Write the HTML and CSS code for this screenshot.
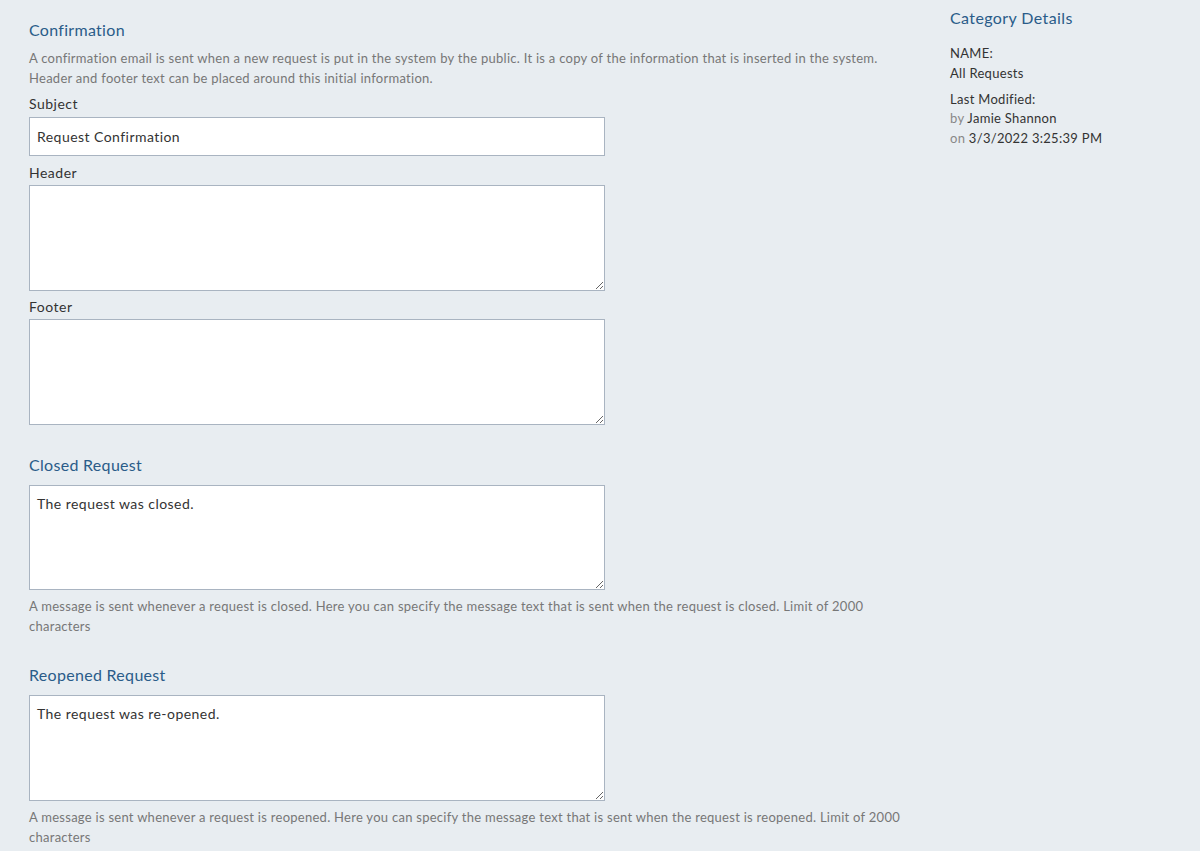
FILE: index.html
```html
<!DOCTYPE html>
<html>
<head>
<meta charset="utf-8">
<link rel="stylesheet" href="styles.css">
</head>
<body>
<div class="page">
  <main class="main">
    <section class="section">
      <h2 class="heading">Confirmation</h2>
      <p class="desc">A confirmation email is sent when a new request is put in the system by the public. It is a copy of the information that is inserted in the system. Header and footer text can be placed around this initial information.</p>
      <label class="label">Subject</label>
      <input class="input" type="text" value="Request Confirmation">
      <label class="label label-gap">Header</label>
      <textarea class="textarea"></textarea>
      <label class="label label-gap label-gap-2">Footer</label>
      <textarea class="textarea"></textarea>
    </section>
    <section class="section section-2">
      <h2 class="heading">Closed Request</h2>
      <textarea class="textarea textarea-short">The request was closed.</textarea>
      <p class="help">A message is sent whenever a request is closed. Here you can specify the message text that is sent when the request is closed. Limit of 2000 characters</p>
    </section>
    <section class="section section-3">
      <h2 class="heading">Reopened Request</h2>
      <textarea class="textarea">The request was re-opened.</textarea>
      <p class="help">A message is sent whenever a request is reopened. Here you can specify the message text that is sent when the request is reopened. Limit of 2000 characters</p>
    </section>
  </main>
  <aside class="side">
    <h3 class="side-title">Category Details</h3>
    <div class="side-block">
      <div class="side-line">NAME:</div>
      <div class="side-line">All Requests</div>
    </div>
    <div class="side-block">
      <div class="side-line">Last Modified:</div>
      <div class="side-line"><span class="muted">by</span> Jamie Shannon</div>
      <div class="side-line"><span class="muted">on</span> 3/3/2022 3:25:39 PM</div>
    </div>
  </aside>
</div>
</body>
</html>
```

FILE: styles.css
```css
* { box-sizing: border-box; }
html, body {
  margin: 0;
  padding: 0;
  background: #e8edf1;
}
body {
  font-family: "Lato", "Open Sans", sans-serif;
  color: #333;
}
.page {
  display: flex;
  padding: 0 0 0 29px;
}
.main {
  width: 880px;
  padding-top: 20px;
}
.heading {
  margin: 0;
  font-size: 16px;
  font-weight: 400;
  color: #2a5c89;
  line-height: 20px;
  letter-spacing: 0.3px;
}
.desc {
  margin: 8px 0 0;
  font-size: 13px;
  line-height: 20px;
  color: #777;
  letter-spacing: 0.27px;
  max-width: 870px;
}
.label {
  display: block;
  font-size: 14px;
  line-height: 20px;
  color: #333;
  letter-spacing: 0.5px;
  margin: 6px 0 3px;
}
.label-gap { margin-top: 7px; margin-bottom: 2px; }
.label-gap-2 { margin-top: 6px; }
.input, .textarea {
  display: block;
  width: 576px;
  margin: 0;
  border: 1px solid #a9b4c1;
  background: #fff;
  font-family: inherit;
  font-size: 14px;
  letter-spacing: 0.45px;
  color: #333;
  padding: 8px 7px;
}
.input { height: 39px; }
.textarea {
  height: 106px;
  resize: vertical;
  line-height: 20px;
  padding: 8px 7px;
}
.textarea-short { height: 105px; }
.section-2 { margin-top: 30px; }
.section-2 .heading, .section-3 .heading { margin-bottom: 10px; }
.section-3 { margin-top: 29px; }
.help {
  margin: 6px 0 0;
  font-size: 13px;
  line-height: 20px;
  color: #777;
  letter-spacing: 0.27px;
  max-width: 880px;
}
.side {
  padding-left: 41px;
  padding-top: 8px;
}
.side-title {
  margin: 0 0 15px;
  font-size: 16px;
  font-weight: 400;
  color: #2a5c89;
  line-height: 20px;
  letter-spacing: 0.4px;
}
.side-block {
  margin-bottom: 6px;
  font-size: 13px;
  line-height: 20px;
  letter-spacing: 0.3px;
  color: #333;
}
.side-block:last-child .side-line + .side-line { line-height: 19.5px; }
.muted { color: #888; }
```
